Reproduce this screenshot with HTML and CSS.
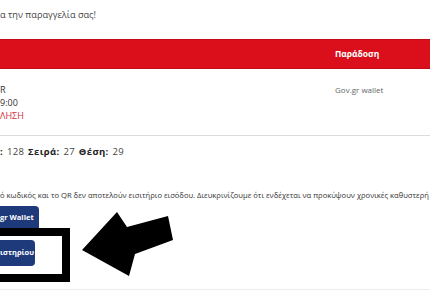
FILE: index.html
```html
<!DOCTYPE html>
<html lang="el">
<head>
<meta charset="utf-8">
<link rel="stylesheet" href="styles.css">
</head>
<body>
<div class="page">
  <p class="intro">α την παραγγελία σας!</p>
  <div class="thead">
    <div class="cell"></div>
    <div class="cell head-right">Παράδοση</div>
  </div>
  <div class="trow">
    <div class="cell">
      <div class="line">R</div>
      <div class="line">9:00</div>
      <div class="line red">ΛΗΣΗ</div>
    </div>
    <div class="cell wallet">Gov.gr wallet</div>
  </div>
  <p class="seat"><b>:</b> 128 <b>Σειρά:</b> 27 <b>Θέση:</b> 29</p>
  <p class="notice">ό κωδικός και το QR δεν αποτελούν εισιτήριο εισόδου. Διευκρινίζουμε ότι ενδέχεται να προκύψουν χρονικές καθυστερή</p>
  <div class="buttons">
    <span class="btn btn-wallet">gr Wallet</span>
    <span class="btn btn-ticket">ιστηρίου</span>
  </div>
  <div class="footer-line"></div>

  <div class="frame"></div>
  <svg class="arrow" width="430" height="300" viewBox="0 0 430 300">
    <polygon points="82,250 117,212 127,227 168,216 173,240 135,254 129,276" fill="#000"/>
  </svg>
</div>
</body>
</html>
```

FILE: styles.css
```css
html, body {
  margin: 0;
  padding: 0;
  background: #fff;
}
.page {
  position: relative;
  width: 430px;
  height: 300px;
  overflow: hidden;
  font-family: "Open Sans", "Noto Sans", sans-serif;
  color: #333;
}
p { margin: 0; }
.intro {
  padding-top: 9px;
  font-size: 9.2px;
  line-height: 12px;
  color: #444;
}
.thead {
  margin-top: 18px;
  height: 30px;
  background: #da0f1b;
  display: grid;
  grid-template-columns: 335px 1fr;
  box-shadow: inset 0 1px 0 #c20d18, inset 0 -1px 0 #c20d18;
}
.head-right {
  color: #fff;
  font-weight: 700;
  font-size: 8.5px;
  line-height: 30px;
}
.trow {
  display: grid;
  grid-template-columns: 335px 1fr;
  padding: 14px 0 13px;
  border-bottom: 1px solid #dcdcdc;
}
.line {
  font-size: 9px;
  line-height: 13px;
}
.red { color: #d3313b; }
.wallet {
  font-size: 8px;
  line-height: 13px;
  color: #666;
}
.seat {
  margin-top: 10px;
  font-size: 9.5px;
  line-height: 12px;
  letter-spacing: 0.35px;
  word-spacing: 1px;
  color: #444;
}
.seat b { color: #222; }
.notice {
  margin-top: 32px;
  font-size: 7.6px;
  line-height: 11px;
  white-space: nowrap;
  color: #333;
}
.buttons {
  margin-top: 5px;
  display: flex;
  flex-direction: column;
  align-items: flex-start;
  gap: 8px;
}
.btn {
  display: block;
  height: 26px;
  line-height: 24px;
  background: #1f3a7a;
  color: #fff;
  font-weight: 700;
  font-size: 7.5px;
  border-radius: 0 4px 4px 0;
}
.btn-wallet { width: 39px; line-height: 23px; }
.btn-ticket { width: 35px; }
.footer-line {
  margin-top: 23px;
  border-top: 1px solid #ececec;
}
.frame {
  position: absolute;
  left: -10px;
  top: 228px;
  width: 64px;
  height: 38px;
  border: 8px solid #000;
}
.arrow {
  position: absolute;
  left: 0;
  top: 0;
}
```
